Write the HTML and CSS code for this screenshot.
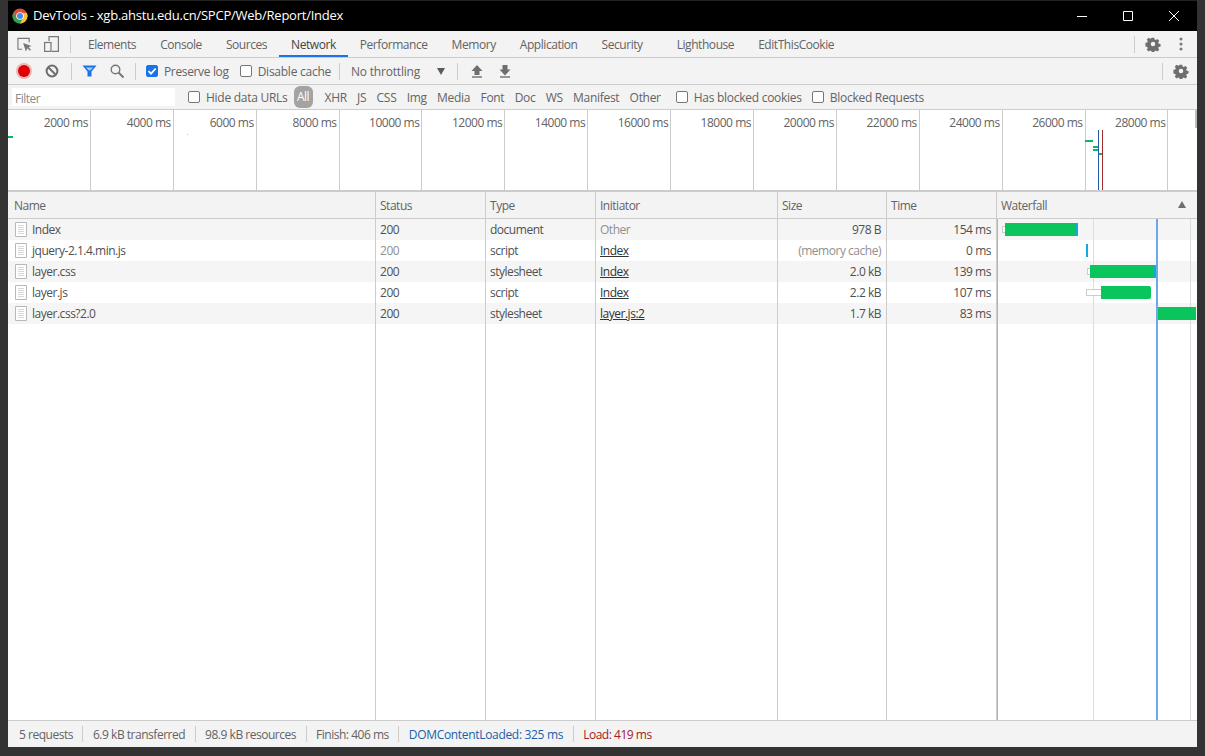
FILE: index.html
```html
<!DOCTYPE html>
<html lang="en">
<head>
<meta charset="utf-8">
<title>DevTools</title>
<link rel="stylesheet" href="styles.css">
</head>
<body>
<svg class="defs" width="0" height="0"><symbol id="doc" viewBox="0 0 12 15"><path d="M.5.500h11v14H.5z" fill="#fff" stroke="#b8b8b8"/><path d="M3 3.500h6M3 5.500h6M3 7.500h6M3 9.500h6M3 11.500h6" stroke="#d8d8d8"/></symbol><symbol id="cog" viewBox="0 0 16 16"><path fill="#6e6e6e" fill-rule="evenodd" d="M6.600 1h2.800l.4 2 1.300.6 1.800-1.100 2 2-1.100 1.800.6 1.300 2 .4v2.800l-2 .4-.6 1.300 1.100 1.800-2 2-1.800-1.100-1.300.6-.4 2H6.600l-.4-2-1.300-.6-1.800 1.100-2-2 1.100-1.800-.6-1.300-2-.4V6.600l2-.4.6-1.300L1.100 3.100l2-2 1.800 1.100 1.300-.6ZM8 5.500a2.500 2.500 0 1 0 0 5 2.500 2.500 0 0 0 0-5Z" transform="translate(.8 .8) scale(.9)"/></symbol></svg>
<div class="window">
  <header class="titlebar">
    <svg class="logo" width="16" height="16" viewBox="0 0 16 16"><circle cx="8" cy="8" r="7.500" fill="#e04a3a"/><path d="M8 8 8 15.500A7.500 7.500 0 0 0 14.900 5H8Z" fill="#f6c52e"/><path d="M8 8 4.600 10.200 1.500 4.200A7.500 7.500 0 0 0 8 15.500L11.200 9.800Z" fill="#2fa04f"/><circle cx="8" cy="8" r="3.800" fill="#fff"/><circle cx="8" cy="8" r="3" fill="#4a8be8"/></svg>
    <span class="title">DevTools - xgb.ahstu.edu.cn/SPCP/Web/Report/Index</span>
    <div class="winbtns">
      <svg width="46" height="30" viewBox="0 0 46 30"><path d="M18 15.500h10" stroke="#fff"/></svg>
      <svg width="46" height="30" viewBox="0 0 46 30"><path d="M18.500 10.500h9v9h-9z" fill="none" stroke="#fff"/></svg>
      <svg width="46" height="30" viewBox="0 0 46 30"><path d="M18 10l10 10M28 10 18 20" stroke="#fff" fill="none"/></svg>
    </div>
  </header>

  <nav class="tabbar">
    <svg class="ic-inspect" width="15" height="15" viewBox="0 0 16 16"><path d="M5.500 13H1V1.500H13V5.500" fill="none" stroke="#777" stroke-width="1.200"/><path d="M6.500 6.500 15.500 9.500l-3.200 1.400 2.600 2.600-1.100 1.100-2.600-2.600L9.500 15.500Z" fill="#777"/></svg>
    <svg class="ic-device" width="15" height="16" viewBox="0 0 15 16"><path d="M5 5V.6h9.400v14.800H8" fill="none" stroke="#777" stroke-width="1.200"/><rect x=".6" y="6.500" width="6.400" height="8.900" fill="none" stroke="#777" stroke-width="1.200"/></svg>
    <i class="sep sep-tab"></i>
    <div class="tabs">
      <a class="tab">Elements</a><a class="tab">Console</a><a class="tab">Sources</a><a class="tab active">Network</a><a class="tab">Performance</a><a class="tab">Memory</a><a class="tab">Application</a><a class="tab">Security</a><a class="tab tab-wide">Lighthouse</a><a class="tab">EditThisCookie</a>
    </div>
    <i class="sep sep-right"></i>
    <svg class="gear gear-a" width="16" height="16"><use href="#cog"/></svg>
    <svg class="dots" width="4" height="14" viewBox="0 0 4 14"><circle cx="2" cy="2" r="1.500" fill="#777"/><circle cx="2" cy="7" r="1.500" fill="#777"/><circle cx="2" cy="12" r="1.500" fill="#777"/></svg>
  </nav>

  <div class="toolbar">
    <span class="record"></span>
    <svg class="ic-clear" width="14" height="14" viewBox="0 0 14 14"><circle cx="7" cy="7" r="5.400" fill="none" stroke="#6e6e6e" stroke-width="2"/><path d="M3.300 3.300l7.400 7.400" stroke="#6e6e6e" stroke-width="2"/></svg>
    <i class="sep sep-a"></i>
    <svg class="ic-filter" width="15" height="12" viewBox="0 0 15 12"><path d="M.5.500h14L9.500 6.500V11.500H5.500V6.500Z" fill="#1a73e8"/><path d="M4 2.500h7L8.500 5.300H6.500Z" fill="#a8ccf5"/></svg>
    <svg class="ic-search" width="14" height="14" viewBox="0 0 14 14"><circle cx="5.500" cy="5.500" r="4.300" fill="none" stroke="#777" stroke-width="1.400"/><path d="M8.500 8.500l5 5" stroke="#777" stroke-width="2"/></svg>
    <i class="sep sep-b"></i>
    <span class="check checked"><svg width="12" height="12" viewBox="0 0 12 12"><path d="M2.500 6.200 5 8.700 9.700 3.500" fill="none" stroke="#fff" stroke-width="1.800"/></svg></span>
    <span class="lbl lbl-preserve">Preserve log</span>
    <span class="check"></span>
    <span class="lbl lbl-disable">Disable cache</span>
    <i class="sep sep-c"></i>
    <span class="throttle">No throttling</span>
    <span class="tri"></span>
    <i class="sep sep-d"></i>
    <svg class="ic-up" width="12" height="13" viewBox="0 0 12 13"><path d="M6 0 11.500 6H8.500V10H3.500V6H.5Z" fill="#6e6e6e"/><path d="M1 12h10" stroke="#6e6e6e" stroke-width="1.400"/></svg>
    <svg class="ic-down" width="12" height="13" viewBox="0 0 12 13"><path d="M6 10.500 .5 4.500H3.500V0H8.500V4.500H11.500Z" fill="#6e6e6e"/><path d="M1 12h10" stroke="#6e6e6e" stroke-width="1.400"/></svg>
    <i class="sep sep-right2"></i>
    <svg class="gear gear-b" width="16" height="16"><use href="#cog"/></svg>
  </div>

  <div class="filterbar">
    <span class="filter-input">Filter</span>
    <span class="check check-hide"></span>
    <span class="lbl lbl-hide">Hide data URLs</span>
    <span class="pill">All</span>
    <span class="ftype f-xhr">XHR</span><span class="ftype f-js">JS</span><span class="ftype f-css">CSS</span><span class="ftype f-img">Img</span><span class="ftype f-media">Media</span><span class="ftype f-font">Font</span><span class="ftype f-doc">Doc</span><span class="ftype f-ws">WS</span><span class="ftype f-man">Manifest</span><span class="ftype f-oth">Other</span>
    <span class="check check-blocked"></span>
    <span class="lbl lbl-blocked">Has blocked cookies</span>
    <span class="check check-req"></span>
    <span class="lbl">Blocked Requests</span>
  </div>

  <section class="overview">
    <div class="tick">2000 ms</div><div class="tick">4000 ms</div><div class="tick">6000 ms</div><div class="tick">8000 ms</div><div class="tick">10000 ms</div><div class="tick">12000 ms</div><div class="tick">14000 ms</div><div class="tick">16000 ms</div><div class="tick">18000 ms</div><div class="tick">20000 ms</div><div class="tick">22000 ms</div><div class="tick">24000 ms</div><div class="tick">26000 ms</div><div class="tick">28000 ms</div>
    <i class="mark m0"></i><i class="mark m1"></i><i class="mark m2"></i><i class="mark m3"></i><i class="mark m4"></i><i class="mark m5"></i>
    <i class="vline vblue"></i><i class="vline vred"></i><i class="overview-edge"></i>
  </section>

  <section class="table">
    <div class="row head">
      <div class="cell">Name</div><div class="cell">Status</div><div class="cell">Type</div><div class="cell">Initiator</div><div class="cell">Size</div><div class="cell">Time</div>
      <div class="cell wf-head">Waterfall<span class="sort"></span></div>
    </div>
    <div class="row">
      <div class="cell name"><svg class="file" width="12" height="15"><use href="#doc"/></svg>Index</div><div class="cell">200</div><div class="cell">document</div><div class="cell dim">Other</div><div class="cell num">978 B</div><div class="cell num">154 ms</div><div class="cell"></div>
    </div>
    <div class="row">
      <div class="cell name"><svg class="file" width="12" height="15"><use href="#doc"/></svg>jquery-2.1.4.min.js</div><div class="cell dim">200</div><div class="cell">script</div><div class="cell link">Index</div><div class="cell num dim">(memory cache)</div><div class="cell num">0 ms</div><div class="cell"></div>
    </div>
    <div class="row">
      <div class="cell name"><svg class="file" width="12" height="15"><use href="#doc"/></svg>layer.css</div><div class="cell">200</div><div class="cell">stylesheet</div><div class="cell link">Index</div><div class="cell num">2.0 kB</div><div class="cell num">139 ms</div><div class="cell"></div>
    </div>
    <div class="row">
      <div class="cell name"><svg class="file" width="12" height="15"><use href="#doc"/></svg>layer.js</div><div class="cell">200</div><div class="cell">script</div><div class="cell link">Index</div><div class="cell num">2.2 kB</div><div class="cell num">107 ms</div><div class="cell"></div>
    </div>
    <div class="row">
      <div class="cell name"><svg class="file" width="12" height="15"><use href="#doc"/></svg>layer.css?2.0</div><div class="cell">200</div><div class="cell">stylesheet</div><div class="cell link">layer.js:2</div><div class="cell num">1.7 kB</div><div class="cell num">83 ms</div><div class="cell"></div>
    </div>
    <div class="row filler">
      <div class="cell"></div><div class="cell"></div><div class="cell"></div><div class="cell"></div><div class="cell"></div><div class="cell"></div><div class="cell"></div>
    </div>
    <div class="wf">
      <i class="wf-grid g1"></i><i class="wf-grid g2"></i>
      <i class="wait w1"></i><i class="bar b1"></i><i class="tip t1"></i>
      <i class="tip t2"></i>
      <i class="wait w3"></i><i class="bar b3"></i><i class="tip t3"></i>
      <i class="wait w4"></i><i class="bar b4"></i>
      <i class="bar b5"></i>
      <i class="wf-line"></i>
    </div>
  </section>

  <footer class="status">
    <span class="stat">5 requests</span><span class="stat">6.9 kB transferred</span><span class="stat">98.9 kB resources</span><span class="stat">Finish: 406 ms</span><span class="stat blue">DOMContentLoaded: 325 ms</span><span class="stat red">Load: 419 ms</span>
  </footer>
</div>
</body>
</html>
```

FILE: styles.css
```css
* { box-sizing: border-box; }
html, body { margin: 0; height: 100%; }
body {
  background: #333;
  font: 12px/16px "Open Sans", "Liberation Sans", sans-serif;
  color: #636363;
  letter-spacing: -.48px;
  overflow: hidden;
}
.defs { position: absolute; }
.window {
  width: 1189px;
  height: 747px;
  margin-left: 8px;
  background: #fff;
  display: flex;
  flex-direction: column;
}
.titlebar {
  height: 31px;
  background: #000;
  border-top: 1px solid #222;
  color: #fff;
  display: flex;
  align-items: center;
  flex: none;
}
.logo { margin-left: 4px; flex: none; }
.title { margin-left: 5px; padding-bottom: 2px; font-size: 13px; letter-spacing: -.24px; }
.winbtns { margin-left: auto; display: flex; margin-top: -1px; }
.winbtns svg { display: block; }

.tabbar {
  height: 27px;
  flex: none;
  background: #f3f3f3;
  border-bottom: 1px solid #ccc;
  display: flex;
  align-items: center;
}
.ic-inspect { margin-left: 9px; }
.ic-device { margin-left: 12px; }
.sep { display: block; width: 1px; height: 17px; background: #ccc; flex: none; }
.sep-tab { margin-left: 11px; }
.tabs { display: flex; margin-left: 5px; height: 26px; }
.tab {
  padding: 0 12px;
  line-height: 28px;
  letter-spacing: -.44px;
  white-space: nowrap;
}
.tab.active { color: #444; border-bottom: 2px solid #1a73e8; }
.tab-wide { margin-left: 10px; }
.sep-right { margin-left: auto; }
.gear-a { margin-left: 10px; }
.dots { margin-left: 18px; margin-right: 14px; }

.toolbar {
  height: 27px;
  flex: none;
  background: #f3f3f3;
  border-bottom: 1px solid #ccc;
  display: flex;
  align-items: center;
}
.record {
  width: 12px; height: 12px;
  margin-left: 10px;
  border-radius: 50%;
  background: #e00000;
  box-shadow: 0 0 0 2px rgba(224, 0, 0, .25);
  flex: none;
}
.ic-clear { margin-left: 15px; }
.sep-a { margin-left: 12px; }
.ic-filter { margin-left: 10px; }
.ic-search { margin-left: 13px; }
.sep-b { margin-left: 11px; }
.check {
  width: 12px; height: 12px;
  border: 1px solid #767676;
  border-radius: 2px;
  background: #fff;
  flex: none;
  display: block;
}
.check.checked { background: #1a73e8; border-color: #1a73e8; }
.check svg { display: block; margin: -1px; }
.toolbar .check.checked { margin-left: 10px; }
.lbl { margin: 2px 0 0 6px; letter-spacing: -.35px; white-space: nowrap; }
.lbl-preserve { margin-right: 11px; }
.lbl-disable { margin-right: 8px; letter-spacing: -.25px; }
.throttle { margin: 2px 0 0 11px; letter-spacing: -.2px; white-space: nowrap; }
.tri {
  width: 0; height: 0;
  margin-left: 17px;
  border-left: 4px solid transparent;
  border-right: 4px solid transparent;
  border-top: 7px solid #5a5a5a;
}
.sep-d { margin-left: 12px; }
.ic-up { margin-left: 13px; }
.ic-down { margin-left: 16px; }
.sep-right2 { margin-left: auto; }
.gear-b { margin-left: 10px; margin-right: 8px; }

.filterbar {
  height: 25px;
  flex: none;
  background: #f3f3f3;
  border-bottom: 1px solid #ccc;
  display: flex;
  align-items: center;
  white-space: nowrap;
}
.filter-input {
  width: 163px; height: 18px;
  margin-left: 4px;
  padding-left: 3px;
  background: #fff;
  color: #8a8a8a;
  line-height: 21px;
}
.filterbar .lbl { letter-spacing: -.27px; }
.check-hide { margin-left: 13px; }
.pill {
  width: 19px; height: 22px;
  margin-left: 6px;
  background: #a3a3a3;
  color: #fff;
  border-radius: 6px;
  text-align: center;
  line-height: 22px;
}
.ftype { margin-top: 2px; margin-left: 10.300px; letter-spacing: -.3px; }
.f-xhr { margin-left: 12px; }
.check-blocked { margin-left: 15px; }
.lbl-blocked { margin-right: 10px; }

.overview {
  height: 82px;
  flex: none;
  position: relative;
  background: #fff;
  border-bottom: 2px solid #ccc;
  display: grid;
  grid-template-columns: repeat(14, 82.900px);
}
.tick {
  border-right: 1px solid #ccc;
  padding: 5px 2px 0 0;
  text-align: right;
  white-space: nowrap;
}
.mark { position: absolute; background: #0bb860; height: 2px; }
.m0 { left: 0; top: 26px; width: 5px; }
.m1 { left: 1077px; top: 30px; width: 8px; }
.m2 { left: 1085px; top: 36px; width: 6px; }
.m3 { left: 1085px; top: 39px; width: 6px; }
.m4 { left: 1090px; top: 43px; width: 4px; }
.m5 { left: 179px; top: 24px; width: 1px; height: 1px; background: #9fd8b8; }
.vline { position: absolute; top: 20px; bottom: 0; width: 1px; }
.vblue { left: 1090px; background: #1f5fa8; }
.vred { left: 1094px; background: #a52a2a; }
.overview-edge { position: absolute; right: 0; top: 0; width: 2px; height: 18px; background: #bbb; }

.table {
  flex: 1;
  position: relative;
  display: flex;
  flex-direction: column;
  min-height: 0;
}
.row {
  display: grid;
  grid-template-columns: 368px 110px 110px 182px 109px 110px 200px;
  height: 21px;
  flex: none;
  line-height: 21px;
  color: #505050;
}
.row:nth-child(even) { background: #f5f5f5; }
.row.head {
  height: 27px;
  line-height: 28px;
  background: #f3f3f3;
  border-bottom: 1px solid #ccc;
  color: #636363;
}
.row.filler { flex: 1; background: #fff; }
.cell {
  border-right: 1px solid #ccc;
  padding: 0 4px;
  white-space: nowrap;
  overflow: hidden;
}
.cell:first-child { padding-left: 6px; }
.cell:last-child { border-right: 0; }
.name { display: flex; align-items: center; }
.file { margin: 0 5px 0 1px; flex: none; }
.dim { color: #8f8f8f; }
.num { text-align: right; padding-right: 5px; }
.link { text-decoration: underline; color: #333; }
.wf-head { display: flex; justify-content: space-between; align-items: flex-start; padding-right: 11px; }
.sort {
  width: 0; height: 0;
  margin-top: 9px;
  border-left: 4px solid transparent;
  border-right: 4px solid transparent;
  border-bottom: 7px solid #6e6e6e;
}
.wf {
  position: absolute;
  left: 989px; top: 27px; right: 0; bottom: 0;
  border-left: 1px solid #b5b5b5;
  pointer-events: none;
}
.wf i { position: absolute; display: block; }
.wf-grid { top: 0; bottom: 0; width: 1px; background: #ddd; }
.g1 { left: 95px; }
.g2 { left: 192px; }
.wf-line { top: 0; bottom: 0; left: 158px; width: 2px; background: #6fa8e8; }
.bar { height: 13px; background: #0ac45c; }
.wait { height: 7px; border: 1px solid #ccc; border-right: 0; background: #fff; }
.tip { height: 13px; width: 2px; background: #14a8e0; }
.w1 { left: 4px; top: 7px; width: 4px; }
.b1 { left: 7px; top: 4px; width: 71px; }
.t1 { left: 78px; top: 4px; }
.t2 { left: 88px; top: 25px; }
.w3 { left: 89px; top: 49px; width: 3px; }
.b3 { left: 92px; top: 46px; width: 64px; }
.t3 { left: 156px; top: 46px; }
.w4 { left: 88px; top: 70px; width: 15px; }
.b4 { left: 103px; top: 67px; width: 50px; border-radius: 0 2px 2px 0; }
.b5 { left: 159px; top: 88px; width: 39px; }

.status {
  height: 27px;
  flex: none;
  background: #f3f3f3;
  border-top: 1px solid #ccc;
  display: flex;
  align-items: center;
  padding-left: 1.500px;
}
.stat {
  padding: 0 9.500px;
  height: 16px;
  line-height: 18px;
  border-right: 1px solid #ccc;
  white-space: nowrap;
}
.stat:last-child { border-right: 0; }
.blue { color: #1a5fa8; letter-spacing: -.32px; }
.red { color: #a52020; }
```
